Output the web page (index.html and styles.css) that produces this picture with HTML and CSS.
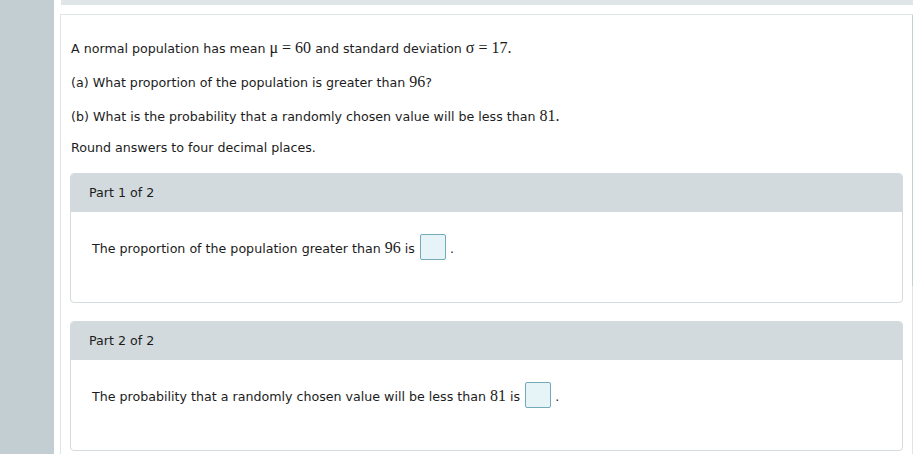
FILE: index.html
```html
<!DOCTYPE html>
<html>
<head>
<meta charset="utf-8">
<link rel="stylesheet" href="styles.css">
</head>
<body>
<div class="sidebar"></div>
<div class="main">
  <div class="topbar"></div>
  <div class="content">
    <p class="math-line">A normal population has mean <span class="m">μ = 60</span> and standard deviation <span class="m">σ = 17.</span></p>
    <p class="math-line">(a) What proportion of the population is greater than <span class="m">96</span>?</p>
    <p class="math-line">(b) What is the probability that a randomly chosen value will be less than <span class="m">81.</span></p>
    <p class="plain-line">Round answers to four decimal places.</p>

    <div class="card first">
      <div class="card-head">Part 1 of 2</div>
      <div class="card-body">The proportion of the population greater than <span class="m">96</span> is <span class="answer"></span>.</div>
    </div>

    <div class="card">
      <div class="card-head">Part 2 of 2</div>
      <div class="card-body">The probability that a randomly chosen value will be less than <span class="m">81</span> is <span class="answer"></span>.</div>
    </div>
  </div>
</div>
</body>
</html>
```

FILE: styles.css
```css
html, body {
  margin: 0;
  padding: 0;
}
body {
  width: 913px;
  height: 454px;
  overflow: hidden;
  display: flex;
  background: #ffffff;
  font-family: "DejaVu Sans", Verdana, sans-serif;
  font-size: 12.65px;
  color: #1c1c1c;
}
.sidebar {
  width: 54px;
  flex: none;
  background: #c3ced3;
}
.main {
  flex: 1;
  padding-left: 6px;
  display: flex;
  flex-direction: column;
}
.topbar {
  height: 5px;
  margin-left: 1px;
  background: #dfe6e8;
  flex: none;
}
.content {
  position: relative;
  margin-top: 9px;
  flex: 1;
  border: 1px solid #dfe5e7;
  border-bottom: none;
  padding: 22px 9px 0 9px;
}
.content::after {
  content: "";
  position: absolute;
  top: 0;
  right: -1px;
  width: 1px;
  height: 271px;
  background: #c6cfd3;
}
.content p {
  margin: 0 0 11px 0;
  padding-left: 1px;
}
.math-line {
  line-height: 23px;
}
.plain-line {
  line-height: 17px;
}
.m {
  font-family: "Liberation Serif", "Times New Roman", serif;
  font-size: 16px;
  line-height: 1;
}
.card {
  border: 1px solid #d3dbde;
  border-radius: 4px;
  margin-top: 18px;
  overflow: hidden;
}
.card.first {
  margin-top: 17px;
}
.card-head {
  background: #d2dadd;
  height: 38px;
  line-height: 38px;
  padding-left: 18px;
}
.card-body {
  height: 90px;
  box-sizing: border-box;
  padding: 22px 20px 0 21px;
  line-height: 26px;
}
.answer {
  display: inline-block;
  width: 24px;
  height: 24px;
  border: 1px solid #72aab8;
  border-radius: 2px;
  background: #e6f4f8;
  vertical-align: -7px;
  margin: 0 4px 0 1px;
}
```
